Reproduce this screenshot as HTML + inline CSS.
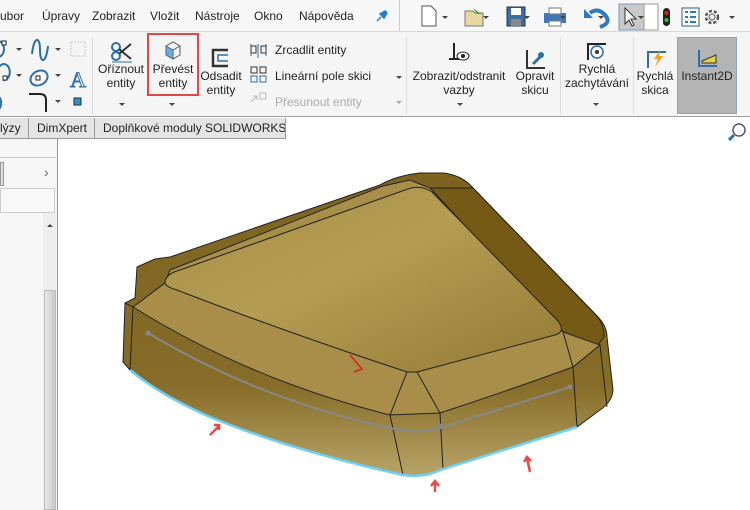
<!DOCTYPE html>
<html><head><meta charset="utf-8"><style>
*{margin:0;padding:0;box-sizing:border-box}
body{width:750px;height:510px;overflow:hidden;background:#fff;font-family:"Liberation Sans","DejaVu Sans",sans-serif;font-size:12px;color:#222;position:relative}
.a{position:absolute;white-space:nowrap}
.c{text-align:center;line-height:14px}
.arr{position:absolute;width:0;height:0;border-left:3px solid transparent;border-right:3px solid transparent;border-top:3px solid #444}
</style></head><body>
<div class="a" style="left:0;top:0;width:400px;height:31px;background:#f7f7f7"></div>
<div class="a" style="left:400px;top:0;width:350px;height:31px;background:#f7f7f7"></div>
<div class="a" style="left:399px;top:0;width:1px;height:31px;background:#ccc"></div>
<div class="a" style="left:0;top:9px;font-size:12px">ubor</div>
<div class="a" style="left:42px;top:9px">Úpravy</div>
<div class="a" style="left:92px;top:9px">Zobrazit</div>
<div class="a" style="left:150px;top:9px">Vložit</div>
<div class="a" style="left:195px;top:9px">Nástroje</div>
<div class="a" style="left:254px;top:9px">Okno</div>
<div class="a" style="left:299px;top:9px">Nápověda</div>
<svg class="a" style="left:375px;top:9px" width="14" height="14"><path d="M2 12l4-4M5 5l4 4 3-5-2-2z" fill="#2a7fc0" stroke="#2a7fc0" stroke-width="1.5"/></svg>
<svg class="a" style="left:410px;top:3px" width="340" height="28">
<path d="M12 3h9l5 5v15H12z" fill="#fff" stroke="#555"/>
<path d="M55 8h8l2 2h8v13H55z" fill="#e8d8a0" stroke="#777"/><path d="M63 5l8 6-4 0z" fill="#3a3"/>
<rect x="97" y="4" width="18" height="19" fill="#3b6fa3" stroke="#234"/><rect x="101" y="5" width="10" height="7" fill="#fff"/><rect x="101" y="16" width="10" height="7" fill="#888"/>
<rect x="134" y="10" width="22" height="10" fill="#3d78b8"/><rect x="139" y="5" width="12" height="6" fill="#fff" stroke="#777"/><rect x="139" y="18" width="12" height="5" fill="#fff" stroke="#777"/>
<path d="M180 10q8-6 15 2t-5 12" fill="none" stroke="#2c7ac0" stroke-width="4"/><path d="M174 6v9h9z" fill="#2c7ac0"/>
<rect x="209" y="1" width="25" height="26" fill="#c9c9c9" stroke="#7a9ac0"/><path d="M215 5v16l4-4 3 6 2-1-3-6h5z" fill="#fff" stroke="#333"/>
<rect x="234" y="1" width="14" height="26" fill="#fff" stroke="#999"/>
<rect x="253" y="5" width="7" height="18" rx="3.5" fill="#222"/><circle cx="256.5" cy="10" r="2" fill="#d22"/><circle cx="256.5" cy="17" r="2" fill="#3b3"/>
<rect x="272" y="5" width="17" height="18" fill="#fff" stroke="#2c5c8a"/><path d="M275 9h3M280 9h6M275 14h3M280 14h6M275 19h3M280 19h6" stroke="#2c7ac0" stroke-width="2"/>
<circle cx="302" cy="14" r="6" fill="none" stroke="#555" stroke-width="2.5" stroke-dasharray="3 2"/><circle cx="302" cy="14" r="3" fill="none" stroke="#555"/>
</svg>
<div class="arr" style="left:442px;top:16px"></div><div class="arr" style="left:483px;top:16px"></div><div class="arr" style="left:524px;top:16px"></div><div class="arr" style="left:560px;top:16px"></div><div class="arr" style="left:598px;top:16px"></div><div class="arr" style="left:638px;top:16px"></div><div class="arr" style="left:729px;top:16px"></div>
<div class="a" style="left:0;top:31px;width:750px;height:86px;background:#f5f5f5;border-top:1px solid #d8d8d8;border-bottom:1px solid #a0a0a0"></div>
<div class="a" style="left:92px;top:38px;width:1px;height:76px;background:#ddd"></div>
<div class="a" style="left:406px;top:38px;width:1px;height:76px;background:#ddd"></div>
<div class="a" style="left:560px;top:38px;width:1px;height:76px;background:#ddd"></div>
<div class="a" style="left:633px;top:38px;width:1px;height:76px;background:#ddd"></div>
<svg class="a" style="left:0;top:36px" width="92" height="76">
<path d="M-2 5a6 8 0 1 1 0 16" fill="none" stroke="#2c6ea5" stroke-width="2"/><rect x="2" y="5" width="4" height="4" fill="#fff" stroke="#222"/>
<path d="M32 18c2-18 8-18 8-4s6 14 8-4" fill="none" stroke="#2c6ea5" stroke-width="2"/>
<rect x="71" y="6" width="14" height="14" fill="none" stroke="#ccc" stroke-dasharray="2 1"/>
<path d="M-2 34a6 8 0 1 1 5 10" fill="none" stroke="#2c6ea5" stroke-width="2"/><rect x="3" y="40" width="4" height="4" fill="#fff" stroke="#222"/>
<ellipse cx="39" cy="42" rx="9" ry="7" transform="rotate(-30 39 42)" fill="none" stroke="#2c6ea5" stroke-width="2"/><rect x="36" y="40" width="4" height="4" fill="#fff" stroke="#222"/>
<text x="70" y="51" font-size="22" fill="#fff" stroke="#2c6ea5" font-family="Liberation Serif">A</text>
<path d="M-2 60a6 8 0 0 1 0 14" fill="none" stroke="#2c6ea5" stroke-width="2"/>
<path d="M29 58h11q6 0 6 6v12" fill="none" stroke="#222" stroke-width="2"/>
<rect x="74" y="62" width="7" height="7" fill="#3d8dc8" stroke="#134"/>
</svg>
<div class="arr" style="left:16px;top:48px"></div><div class="arr" style="left:55px;top:48px"></div>
<div class="arr" style="left:16px;top:74px"></div><div class="arr" style="left:55px;top:74px"></div><div class="arr" style="left:55px;top:100px"></div>
<svg class="a" style="left:110px;top:41px" width="26" height="22"><circle cx="6" cy="6" r="4" fill="none" stroke="#2c6ea5" stroke-width="2"/><circle cx="6" cy="15" r="4" fill="none" stroke="#2c6ea5" stroke-width="2"/><path d="M9 8l12 10M9 13l12-10" stroke="#333" stroke-width="2"/><path d="M2 21h20" stroke="#2c6ea5"/></svg>
<div class="a c" style="left:96px;top:62px;width:50px">Oříznout<br>entity</div>
<div class="arr" style="left:119px;top:103px"></div>
<div class="a" style="left:147px;top:33px;width:52px;height:63px;border:2px solid #e04848"></div>
<svg class="a" style="left:163px;top:40px" width="20" height="20"><path d="M3 6l7-4 7 4v9l-7 4-7-4z" fill="#f4f4f4" stroke="#555"/><path d="M3 6l7 4 7-4M10 10v9" stroke="#555" fill="none"/><path d="M3 6l7 4v9l-7-4z" fill="#3b88c8" opacity=".7"/></svg>
<div class="a c" style="left:148px;top:62px;width:50px">Převést<br>entity</div>
<div class="arr" style="left:169px;top:103px"></div>
<svg class="a" style="left:210px;top:48px" width="20" height="20"><path d="M18 2H3v16h15" fill="none" stroke="#333" stroke-width="2.5"/><path d="M18 7H8v6h10" fill="none" stroke="#2c6ea5" stroke-width="1.5"/></svg>
<div class="a c" style="left:200px;top:69px;width:42px">Odsadit<br>entity</div>
<svg class="a" style="left:249px;top:42px" width="20" height="66"><path d="M2 2v12M9 2v14M17 2v12" stroke="#2c6ea5"/><rect x="2" y="4" width="5" height="7" fill="none" stroke="#333"/><rect x="12" y="4" width="5" height="7" fill="none" stroke="#333"/>
<rect x="2" y="25" width="6" height="6" fill="none" stroke="#333"/><rect x="11" y="25" width="6" height="6" fill="none" stroke="#333"/><rect x="2" y="34" width="6" height="6" fill="none" stroke="#2c6ea5"/><rect x="11" y="34" width="6" height="6" fill="none" stroke="#2c6ea5"/>
<path d="M2 60l6-6M4 54h4v4" stroke="#bbb" fill="none"/><rect x="11" y="51" width="6" height="6" fill="none" stroke="#bbb"/></svg>
<div class="a" style="left:275px;top:43px">Zrcadlit entity</div>
<div class="a" style="left:275px;top:69px">Lineární pole skici</div>
<div class="a" style="left:275px;top:95px;color:#aaa">Přesunout entity</div>
<div class="arr" style="left:396px;top:76px"></div><div class="arr" style="left:396px;top:101px;border-top-color:#aaa"></div>
<svg class="a" style="left:448px;top:41px" width="24" height="22"><path d="M6 2v16M1 18h10" stroke="#222" stroke-width="2"/><ellipse cx="15" cy="15" rx="6" ry="4" fill="#fff" stroke="#222"/><circle cx="15" cy="15" r="2" fill="#222"/></svg>
<div class="a c" style="left:409px;top:69px;width:100px">Zobrazit/odstranit<br>vazby</div>
<div class="arr" style="left:457px;top:103px"></div>
<svg class="a" style="left:525px;top:48px" width="22" height="22"><path d="M2 2v18h18" fill="none" stroke="#333" stroke-width="2"/><path d="M8 16l8-8" stroke="#2c6ea5" stroke-width="3"/><circle cx="16" cy="7" r="3" fill="#2c6ea5"/></svg>
<div class="a c" style="left:512px;top:69px;width:46px">Opravit<br>skicu</div>
<svg class="a" style="left:586px;top:42px" width="22" height="20"><path d="M2 18V2h18" fill="none" stroke="#222" stroke-width="2"/><circle cx="11" cy="10" r="6" fill="none" stroke="#2c6ea5" stroke-width="1.5"/><circle cx="11" cy="10" r="2" fill="#333"/></svg>
<div class="a c" style="left:562px;top:62px;width:70px">Rychlá<br>zachytávání</div>
<div class="arr" style="left:593px;top:103px"></div>
<svg class="a" style="left:646px;top:48px" width="22" height="22"><path d="M2 20V4h18" fill="none" stroke="#2c6ea5" stroke-width="2"/><path d="M14 2l-6 9h4l-3 8 8-11h-4z" fill="#f0a020"/></svg>
<div class="a c" style="left:636px;top:69px;width:38px">Rychlá<br>skica</div>
<div class="a" style="left:677px;top:37px;width:60px;height:77px;background:#b4b4b4;border:1px solid #8aa6c6"></div>
<svg class="a" style="left:697px;top:48px" width="22" height="20"><path d="M2 2v16h18" fill="none" stroke="#2c6ea5" stroke-width="2"/><path d="M5 13l14-6v8H5z" fill="#e8d040" stroke="#333"/></svg>
<div class="a c" style="left:678px;top:69px;width:58px">Instant2D</div>
<div class="a" style="left:0;top:118px;width:285px;height:21px;background:#e4e4e4;border-bottom:1px solid #999"></div>
<div class="a" style="left:0;top:121px;font-size:12px">lýzy</div>
<div class="a" style="left:28px;top:118px;width:1px;height:21px;background:#999"></div>
<div class="a" style="left:37px;top:121px">DimXpert</div>
<div class="a" style="left:94px;top:118px;width:1px;height:21px;background:#999"></div>
<div class="a" style="left:103px;top:121px">Doplňkové moduly SOLIDWORKS</div>
<div class="a" style="left:285px;top:118px;width:1px;height:21px;background:#999"></div>
<div class="a" style="left:0;top:139px;width:58px;height:371px;background:#f6f6f6;border-right:1px solid #999"></div>
<div class="a" style="left:0;top:157px;width:56px;height:1px;background:#ccc"></div>
<div class="a" style="left:0;top:162px;width:4px;height:24px;background:#ddd;border:1px solid #999"></div>
<div class="a" style="left:44px;top:164px;color:#666;font-size:14px">›</div>
<div class="a" style="left:0;top:188px;width:55px;height:25px;border:1px solid #ccc;background:#f8f8f8"></div>
<div class="a" style="left:43px;top:213px;width:13px;height:297px;background:#eee"></div>
<div class="a" style="left:44px;top:290px;width:12px;height:220px;background:linear-gradient(90deg,#e8e8e8,#c8c8c8);border:1px solid #bbb"></div>
<div class="arr" style="left:47px;top:224px;border-top:none;border-bottom:3px solid #444"></div>
<svg class="a" style="left:727px;top:122px" width="20" height="20"><circle cx="12" cy="8" r="6" fill="#fff" stroke="#557" stroke-width="1.5"/><path d="M7 13l-5 5" stroke="#2c6ea5" stroke-width="3"/></svg>
<svg class="a" style="left:0;top:0" width="750" height="510">
<defs><linearGradient id="side" x1="0" y1="0" x2="0" y2="1"><stop offset="0" stop-color="#7c6420"/><stop offset=".7" stop-color="#866c28"/><stop offset="1" stop-color="#b8a468"/></linearGradient>
<linearGradient id="top" x1="0" y1="0" x2="1" y2="1"><stop offset="0" stop-color="#a88e46"/><stop offset=".45" stop-color="#b49c52"/><stop offset="1" stop-color="#947a34"/></linearGradient></defs>
<path d="M137 267L155 259L170 257L380 185Q395 176 420 173L443 173Q462 175 473 188L597 316Q607 326 607 337L613 390Q612 402 600 410L577 427L440 470Q425 478 403 475Q290 450 210 417Q160 395 130 370L123 362L125 303L135 298Z" fill="url(#side)" stroke="#222"/>
<path d="M473 188L597 316Q604 325 604 337L598 345L563 332L430 188Z" fill="#745a14" stroke="#222"/>
<path d="M133 307L165 283L170 270L383 186L410 180L430 188L563 332L600 345L573 367Q510 390 440 413L390 415Q250 380 133 307Z" fill="#a88e48" stroke="#222"/>
<path d="M165 283Q165 274 180 270L405 190Q420 184 432 192L558 321Q566 332 555 335L417 372L407 372Q280 330 177 290Q166 287 165 283Z" fill="url(#top)" stroke="#222"/>
<path d="M133 307L130 370M407 372L390 415L403 475M417 372L440 413L443 470M563 332L573 367L577 427M600 345L607 407M125 303L133 307" stroke="#222" fill="none"/>
<path d="M148 333Q260 400 390 428Q420 435 440 428L570 387" stroke="#888" stroke-width="2" fill="none"/>
<circle cx="148" cy="333" r="2.5" fill="#888"/><circle cx="570" cy="387" r="2.5" fill="#888"/><circle cx="390" cy="428" r="2.5" fill="#888"/><circle cx="440" cy="426" r="2.5" fill="#888"/>
<path d="M130 370Q160 395 210 417Q290 450 403 475Q425 478 440 470L577 427" stroke="#6cd0f8" stroke-width="2.5" fill="none"/>
<path d="M210 435l9-9M214 425h5v5" stroke="#e84848" stroke-width="2.5" fill="none"/>
<path d="M435 492v-10M431 486l4-5 4 5" stroke="#e84848" stroke-width="2.5" fill="none"/>
<path d="M530 472l-3-14M524 462l3-5 4 4" stroke="#e84848" stroke-width="2.5" fill="none"/>
<path d="M350 355l12 14-8 3" stroke="#e02020" stroke-width="1.5" fill="none"/>
</svg>
</body></html>
